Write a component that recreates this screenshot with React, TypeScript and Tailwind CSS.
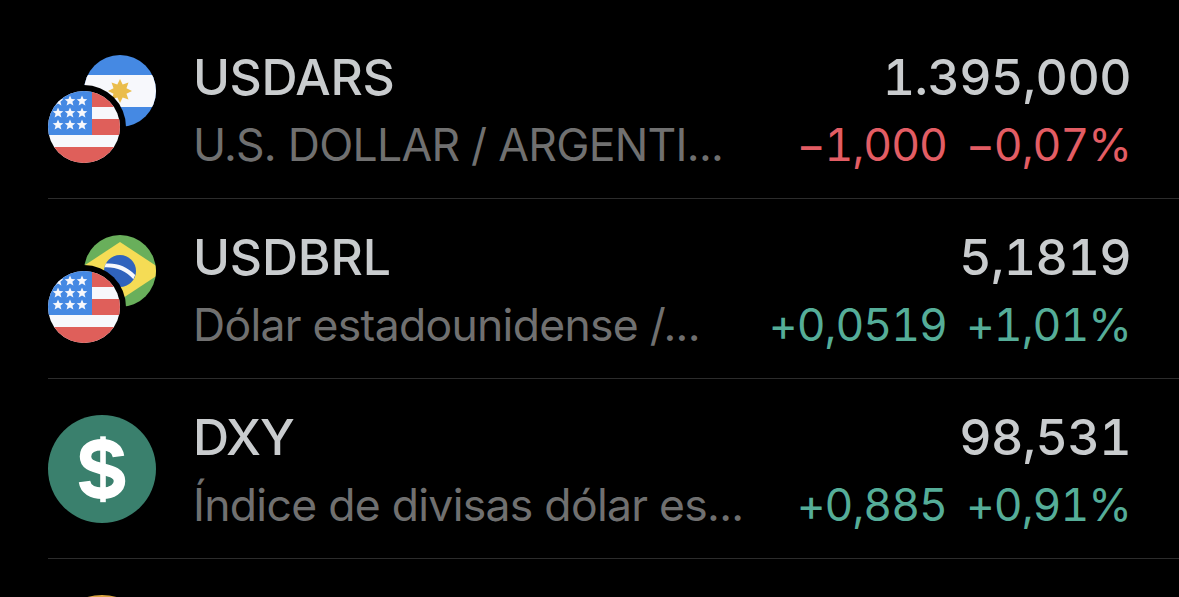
import type { ReactNode } from 'react';

const STAR = 'M0-5.4 1.5-1.9 5.3-1.7 2.4.8 3.4 4.6 0 2.5-3.4 4.6-2.4.8-5.3-1.7-1.5-1.9Z';

function UsFlag() {
  return (
    <g>
      <circle cx="36" cy="72" r="42" fill="#000" />
      <g clipPath="url(#front)">
        <rect y="36" width="72" height="72" fill="#f7f8fc" />
        <rect x="44" y="36" width="28" height="16" fill="#df5f5a" />
        <rect x="44" y="64" width="28" height="16" fill="#df5f5a" />
        <rect y="92" width="72" height="16" fill="#df5f5a" />
        <rect y="36" width="44" height="44" fill="#4589e3" />
        {[46, 58, 70].map((y) =>
          [10, 22, 34].map((x) => (
            <path key={`${x}-${y}`} d={STAR} transform={`translate(${x} ${y})`} fill="#f7f8fc" />
          )),
        )}
      </g>
    </g>
  );
}

function PairIcon({ children }: { children: ReactNode }) {
  return (
    <svg viewBox="0 0 108 108" className="size-[108px] shrink-0 overflow-visible">
      <defs>
        <clipPath id="front">
          <circle cx="36" cy="72" r="36" />
        </clipPath>
        <clipPath id="back">
          <circle cx="72" cy="36" r="36" />
        </clipPath>
      </defs>
      <g clipPath="url(#back)">{children}</g>
      <UsFlag />
    </svg>
  );
}

function Argentina() {
  const points = Array.from({ length: 16 }, (_, i) => {
    const r = i % 2 ? 7 : 12;
    const a = (i * Math.PI) / 8 - Math.PI / 2;
    return `${72 + r * Math.cos(a)},${36 + r * Math.sin(a)}`;
  }).join(' ');
  return (
    <>
      <rect x="36" width="72" height="72" fill="#4589e3" />
      <rect x="36" y="20" width="72" height="32" fill="#f7f8fc" />
      <polygon points={points} fill="#eabd4c" />
    </>
  );
}

function Brazil() {
  return (
    <>
      <rect x="36" width="72" height="72" fill="#69af5b" />
      <path d="M72 7 116 36 72 65 28 36Z" fill="#f5dc55" />
      <circle cx="72" cy="36" r="16" fill="#3063bd" />
      <path d="M56.4 32.4 57.8 28.6C68 27.6 79 31.2 87.2 40L85.4 44.3C78 36 68 31.8 56.4 32.4Z" fill="#f7f8fc" />
    </>
  );
}

function DollarIcon() {
  return (
    <svg viewBox="0 0 108 108" className="size-[108px] shrink-0">
      <circle cx="54" cy="54" r="54" fill="#3a806d" />
      <path
        d="M70.500 41.500C69.500 34 63 29.800 54 29.800C44.500 29.800 37.500 34 37.500 41.500C37.500 49 43.500 51.300 54 53.800C65 56.400 71.500 59 71.500 66C71.500 73.500 64 78.200 54.500 78.200C44 78.200 37.500 74 36.500 66.500"
        fill="none"
        stroke="#fff"
        strokeWidth="11.5"
      />
      <path d="M55 21.300V87.200" stroke="#fff" strokeWidth="5.600" />
    </svg>
  );
}

type Quote = {
  icon: ReactNode;
  symbol: string;
  symbolClass: string;
  name: string;
  price: string;
  change: string;
  percent: string;
  changeClass: string;
};

const quotes: Quote[] = [
  {
    icon: <PairIcon><Argentina /></PairIcon>,
    symbol: 'USDARS',
    symbolClass: 'tracking-[-0.4px]',
    name: 'U.S. DOLLAR / ARGENTI...',
    price: '1.395,000',
    change: '−1,000',
    percent: '−0,07%',
    changeClass: 'text-[#e35d64]',
  },
  {
    icon: <PairIcon><Brazil /></PairIcon>,
    symbol: 'USDBRL',
    symbolClass: 'tracking-[-0.2px]',
    name: 'Dólar estadounidense /...',
    price: '5,1819',
    change: '+0,0519',
    percent: '+1,01%',
    changeClass: 'text-[#55ad98]',
  },
  {
    icon: <DollarIcon />,
    symbol: 'DXY',
    symbolClass: 'tracking-[-1px]',
    name: 'Índice de divisas dólar es...',
    price: '98,531',
    change: '+0,885',
    percent: '+0,91%',
    changeClass: 'text-[#55ad98]',
  },
];

function QuoteRow({ quote: q }: { quote: Quote }) {
  return (
    <li className="flex h-[180px] shrink-0 border-b border-[#2c2c2c] pt-9 pr-12">
      {q.icon}
      <div className="ml-[37px] flex grow flex-col whitespace-nowrap">
        <div className="flex h-11 items-center justify-between text-[50px] leading-[44px] font-medium text-[#c9ccce]">
          <span className={q.symbolClass}>{q.symbol}</span>
          <span className="tracking-[-0.6px] tabular-nums">{q.price}</span>
        </div>
        <div className="mt-6 flex h-11 items-center justify-between text-[44.500px] leading-[44px]">
          <span className="tracking-[-0.71px] text-[#707070]">{q.name}</span>
          <span className={`flex gap-[19px] tracking-[-1px] tabular-nums ${q.changeClass}`}>
            <span>{q.change}</span>
            <span>{q.percent}</span>
          </span>
        </div>
      </div>
    </li>
  );
}

export default function App() {
  return (
    <main className="h-[597px] w-[1179px] overflow-hidden bg-black pt-[19px] pl-12 font-['Inter',sans-serif] [font-feature-settings:'calt'_0]">
      <ul className="flex flex-col">
        {quotes.map((q) => (
          <QuoteRow key={q.symbol} quote={q} />
        ))}
        <li className="pt-9">
          <div className="size-[108px] rounded-full bg-[#d9a441]" />
        </li>
      </ul>
    </main>
  );
}
